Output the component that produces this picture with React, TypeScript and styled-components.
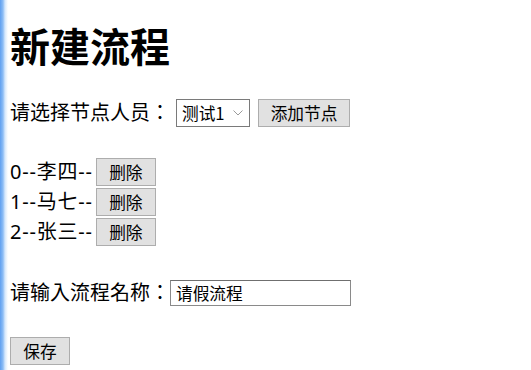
import styled, {createGlobalStyle} from "styled-components";

const GlobalStyle = createGlobalStyle`
    html, body {
        margin: 0;
        padding: 0;
    }
    body {
        min-height: 100vh;
        background: linear-gradient(90deg, #5f9ff0 0, #8dbdf5 3px, #d6e8fc 5px, #fff 8px);
        font-family: "Noto Sans", "Noto Sans CJK TC", sans-serif;
        color: #000;
    }
`

type Node = {
    id: number;
    name: string;
}

const nodes: Node[] = [
    {id: 0, name: "李四"},
    {id: 1, name: "马七"},
    {id: 2, name: "张三"},
]

export default function App() {
    return (
        <>
            <GlobalStyle/>
            <Page>
                <Title>新建流程</Title>

                <FieldRow>
                    <Label>请选择节点人员：</Label>
                    <SelectWrap>
                        <Select defaultValue="测试1">
                            <option>测试1</option>
                            <option>测试2</option>
                        </Select>
                        <Chevron width="10" height="6" viewBox="0 0 10 6">
                            <path d="M0.5 0.5 L5 5 L9.5 0.5" fill="none" stroke="#9a9a9a" strokeWidth="1"/>
                        </Chevron>
                    </SelectWrap>
                    <Button width={92}>添加节点</Button>
                </FieldRow>

                <NodeList>
                    {nodes.map(n => (
                        <NodeRow key={n.id}>
                            <NodeText>{n.id}--{n.name}--</NodeText>
                            <Button width={60}>删除</Button>
                        </NodeRow>
                    ))}
                </NodeList>

                <InputRow>
                    <Label>请输入流程名称：</Label>
                    <Input defaultValue="请假流程"/>
                </InputRow>

                <Footer>
                    <Button width={60}>保存</Button>
                </Footer>
            </Page>
        </>
    );
}

const Page = styled.div`
    padding: 0 10px;
    display: flex;
    flex-direction: column;
    align-items: flex-start;
`
const Title = styled.h1`
    margin: 21px 0 0;
    font-size: 40px;
    line-height: 48px;
    font-weight: 700;
    font-family: "Noto Sans CJK SC", sans-serif;
`
const Label = styled.span`
    font-size: 20px;
    line-height: 28px;
    white-space: nowrap;
`
const NodeText = styled(Label)`
    letter-spacing: 0.8px;
`
const FieldRow = styled.div`
    margin-top: 30px;
    display: flex;
    align-items: center;
    height: 28px;
    gap: 8px;

    & > ${Label} {
        margin-right: -2px;
    }
`
const SelectWrap = styled.div`
    position: relative;
    display: flex;
`
const Select = styled.select`
    appearance: none;
    width: 74px;
    height: 28px;
    padding: 0 0 0 5px;
    border: 1px solid #7a7a7a;
    border-radius: 0;
    background: #fff;
    font-family: "Noto Sans CJK SC", sans-serif;
    font-size: 16.7px;
    color: #000;
`
const Chevron = styled.svg`
    position: absolute;
    right: 7px;
    top: 11px;
    pointer-events: none;
`
const Button = styled.button<{ width: number }>`
    width: ${p => p.width}px;
    height: 28px;
    padding: 0;
    border: 1px solid #adadad;
    border-radius: 0;
    background: #e1e1e1;
    font-family: "Noto Sans CJK SC", sans-serif;
    font-size: 16.7px;
    color: #000;
`
const NodeList = styled.div`
    margin-top: 30px;
    display: flex;
    flex-direction: column;
`
const NodeRow = styled.div`
    display: flex;
    align-items: center;
    height: 30px;
    gap: 3px;
`
const InputRow = styled.div`
    margin-top: 32px;
    display: flex;
    align-items: center;
    height: 28px;
`
const Input = styled.input`
    box-sizing: border-box;
    width: 181px;
    height: 26px;
    padding: 0 5px;
    border: 1px solid #8a8a8a;
    border-top-color: #6f6f6f;
    font-family: "Noto Sans CJK SC", sans-serif;
    font-size: 16.7px;
    color: #000;
    outline: none;
`
const Footer = styled.div`
    margin-top: 30px;
    display: flex;
`
